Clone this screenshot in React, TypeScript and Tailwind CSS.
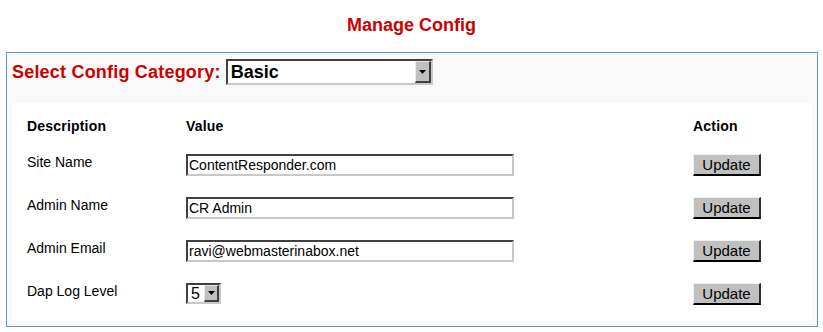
import React from "react";

const rows = [
  { label: "Site Name", value: "ContentResponder.com" },
  { label: "Admin Name", value: "CR Admin" },
  { label: "Admin Email", value: "ravi@webmasterinabox.net" },
];

function DropArrow({ className }: { className: string }) {
  return (
    <span
      className={
        "flex items-center justify-center bg-[#c0c0c0] border-t border-l border-t-[#e8e8e8] border-l-[#e8e8e8] border-b-2 border-r-2 border-b-[#404040] border-r-[#404040] " +
        className
      }
    >
      <svg width="7" height="4" viewBox="0 0 7 4">
        <path d="M0 0h7L3.5 4z" fill="#000" />
      </svg>
    </span>
  );
}

function UpdateButton() {
  return (
    <button
      type="button"
      className="w-[68px] h-[22px] bg-[#c0c0c0] text-[15px] leading-[16px] text-black border-t border-l border-t-[#f0f0f0] border-l-[#f0f0f0] border-b-2 border-r-2 border-b-black border-r-[#303030]"
    >
      Update
    </button>
  );
}

export default function App() {
  return (
    <div className="w-[823px] h-[332px] bg-white font-['Liberation_Sans',Arial,sans-serif]">
      <h1 className="h-[52px] pt-[14px] text-center text-[18px] leading-[22px] font-bold text-[#cc0000]">
        Manage Config
      </h1>

      <div className="ml-[6px] w-[812px] border border-[#5b9bd5] bg-[#f9f9f9] px-[5px] pb-[5px]">
        <div className="flex items-center gap-[5px] pt-[6px] mb-[18px]">
          <span className="text-[18px] leading-[22px] font-bold text-[#cc0000] tracking-[0.2px]">
            Select Config Category:
          </span>
          <div className="flex w-[207px] h-[26px] bg-white border-2 border-t-[#404040] border-l-[#404040] border-b-[#c8c8c8] border-r-[#c8c8c8]">
            <span className="flex-1 pl-[3px] text-[18px] leading-[22px] font-bold text-black">
              Basic
            </span>
            <DropArrow className="w-[16px] h-[22px]" />
          </div>
        </div>

        <div className="bg-white pt-[15px] pb-[16px] pl-[15px]">
          <div className="grid grid-cols-[159px_507px_1fr] text-[14px] leading-[16px] text-black">
            <div className="font-bold mb-[20px] tracking-[0.2px]">Description</div>
            <div className="font-bold mb-[20px] tracking-[0.2px]">Value</div>
            <div className="font-bold mb-[20px] tracking-[0.2px]">Action</div>

            {rows.map((r) => (
              <React.Fragment key={r.label}>
                <div className="mb-[21px]">{r.label}</div>
                <div className="mb-[21px]">
                  <input
                    readOnly
                    defaultValue={r.value}
                    className="block w-[328px] h-[22px] px-[1px] bg-white text-[14px] leading-[16px] text-black outline-none border-2 border-t-[#404040] border-l-[#404040] border-b-[#c8c8c8] border-r-[#c8c8c8]"
                  />
                </div>
                <div className="mb-[21px]">
                  <UpdateButton />
                </div>
              </React.Fragment>
            ))}

            <div>Dap Log Level</div>
            <div>
              <div className="flex w-[35px] h-[21px] bg-white border-2 border-t-[#404040] border-l-[#404040] border-b-[#c8c8c8] border-r-[#c8c8c8]">
                <span className="flex-1 pl-[3px] text-[16px] leading-[17px] text-black">5</span>
                <DropArrow className="w-[15px] h-[17px]" />
              </div>
            </div>
            <div>
              <UpdateButton />
            </div>
          </div>
        </div>
      </div>
    </div>
  );
}
